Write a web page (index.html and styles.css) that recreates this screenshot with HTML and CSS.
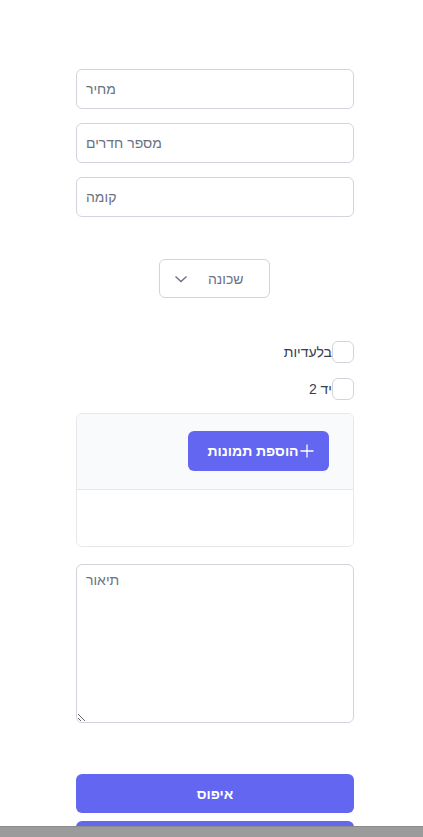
FILE: index.html
```html
<!DOCTYPE html>
<html lang="he" dir="rtl">
<head>
<meta charset="utf-8">
<title>טופס</title>
<link rel="stylesheet" href="styles.css">
</head>
<body>
<form class="form">
  <input class="field" type="text" placeholder="מחיר">
  <input class="field" type="text" placeholder="מספר חדרים">
  <input class="field" type="text" placeholder="קומה">

  <div class="select-row">
    <div class="select">
      <span class="select-label">שכונה</span>
      <svg class="chevron" width="14" height="14" viewBox="0 0 14 14"><path d="M1.5 4.5 L7 9.5 L12.5 4.5" fill="none" stroke="#6b7280" stroke-width="1.4"/></svg>
    </div>
  </div>

  <div class="checks">
    <label class="check"><span class="box"></span><span class="check-text">בלעדיות</span></label>
    <label class="check"><span class="box"></span><span class="check-text">יד 2</span></label>
  </div>

  <div class="upload">
    <div class="upload-head">
      <button type="button" class="btn btn-add">
        <svg class="plus" width="14" height="14" viewBox="0 0 14 14"><path d="M7 0.5 V13.5 M0.5 7 H13.5" stroke="#fff" stroke-width="1.3" fill="none"/></svg>
        <span>הוספת תמונות</span>
      </button>
    </div>
    <div class="upload-body"></div>
  </div>

  <textarea class="area" placeholder="תיאור"></textarea>

  <button type="button" class="btn btn-wide btn-reset">איפוס</button>
  <button type="button" class="btn btn-wide">שמירה</button>
</form>
<div class="hbar"></div>
</body>
</html>
```
FILE: styles.css
```css
html, body {
  margin: 0;
  padding: 0;
  background: #fff;
  font-family: "Liberation Sans", Arial, sans-serif;
  overflow: hidden;
}
.form {
  display: flex;
  flex-direction: column;
  padding: 69px 69px 40px 76px;
}
.field {
  box-sizing: border-box;
  height: 40px;
  width: 100%;
  border: 1px solid #d1d5db;
  border-radius: 6px;
  padding: 0 9px;
  font: 14px "Liberation Sans", Arial, sans-serif;
  color: #374151;
  text-align: left;
  margin-bottom: 14px;
  outline: none;
  background: #fff;
}
.field::placeholder, .area::placeholder { color: #6b7280; }
.select-row {
  display: flex;
  justify-content: center;
  margin-top: 28px;
  padding-right: 2px;
}
.select {
  box-sizing: border-box;
  width: 111px;
  height: 39px;
  border: 1px solid #d1d5db;
  border-radius: 6px;
  display: flex;
  align-items: center;
  justify-content: space-between;
  padding: 0 25px 0 14px;
  font-size: 14px;
  color: #6b7280;
}
.checks {
  display: flex;
  flex-direction: column;
  gap: 15px;
  margin-top: 43px;
}
.check {
  display: flex;
  align-items: center;
  font-size: 14px;
  color: #374151;
}
.box {
  box-sizing: border-box;
  width: 22px;
  height: 22px;
  border: 1.5px solid #d1d5db;
  border-radius: 6px;
  background: #fff;
}
.upload {
  margin-top: 13px;
  border: 1px solid #e5e7eb;
  border-radius: 6px;
  overflow: hidden;
}
.upload-head {
  background: #f9fafb;
  border-bottom: 1px solid #e5e7eb;
  padding: 17px 24px 18px;
  display: flex;
}
.btn {
  border: none;
  background: #6366f1;
  color: #fff;
  border-radius: 6px;
  font: bold 14px "Liberation Sans", Arial, sans-serif;
  height: 40px;
  cursor: pointer;
}
.btn-add {
  width: 141px;
  display: flex;
  align-items: center;
  justify-content: center;
  gap: 1px;
  padding: 0 0 0 4px;
}
.plus { display: block; }
.upload-body { height: 56px; background: #fff; }
.area {
  box-sizing: border-box;
  margin-top: 17px;
  height: 159px;
  width: 100%;
  border: 1px solid #d1d5db;
  border-radius: 6px;
  padding: 7px 9px;
  font: 14px "Liberation Sans", Arial, sans-serif;
  color: #374151;
  text-align: left;
  resize: vertical;
  outline: none;
}
.btn-wide { width: 100%; height: 39px; margin-top: 8px; }
.btn-reset { margin-top: 51px; }
.hbar {
  position: fixed;
  left: 0;
  right: 0;
  bottom: 0;
  height: 10px;
  background: #9b9b9b;
  border-top: 1px solid #8a8a8a;
}
```
